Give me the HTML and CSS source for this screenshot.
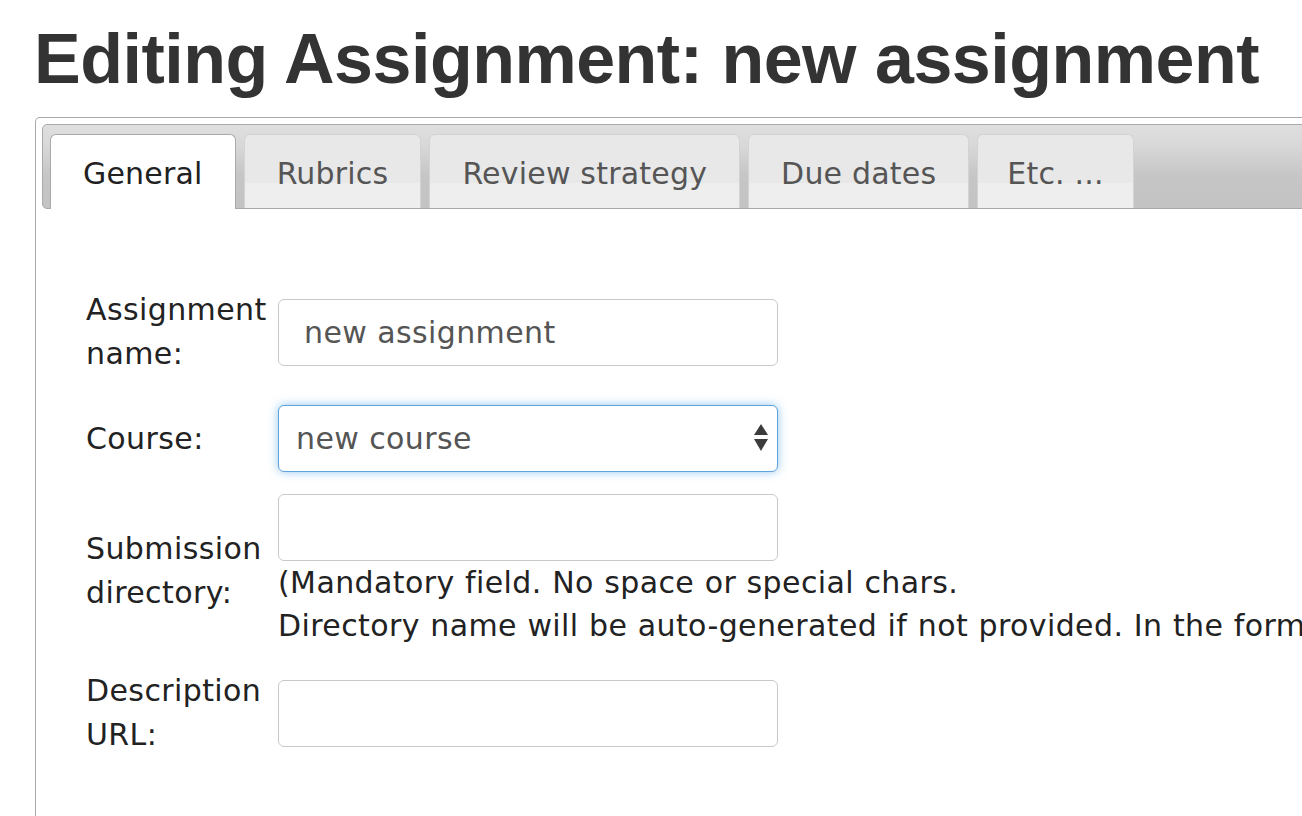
FILE: index.html
```html
<!DOCTYPE html>
<html lang="en">
<head>
    <meta charset="UTF-8">
    <meta name="viewport" content="width=device-width, initial-scale=1.0">
    <title>Editing Assignment</title>
    <link rel="stylesheet" href="styles.css">
</head>
<body>
    <h1 class="page-title">Editing Assignment: new assignment</h1>

    <div class="tabs">
        <ul class="tab-nav">
            <li class="tab active"><a href="#general">General</a></li>
            <li class="tab"><a href="#rubrics">Rubrics</a></li>
            <li class="tab"><a href="#review">Review strategy</a></li>
            <li class="tab"><a href="#due-dates">Due dates</a></li>
            <li class="tab"><a href="#etc">Etc. ...</a></li>
        </ul>

        <div class="tab-panel" id="general">
            <table class="form-table">
                <tr class="row-first">
                    <td class="label">Assignment name:</td>
                    <td><input class="field" type="text" name="name" value="new assignment"></td>
                </tr>
                <tr>
                    <td class="label">Course:</td>
                    <td>
                        <span class="select-wrap">
                            <select class="field select" name="course">
                                <option>new course</option>
                            </select>
                            <!-- up/down arrows of the select -->
                            <svg class="select-arrows" width="14" height="27" viewBox="0 0 14 27">
                                <polygon points="7,0 14,11 0,11" fill="#3c3c3c"/>
                                <polygon points="0,15 14,15 7,27" fill="#3c3c3c"/>
                            </svg>
                        </span>
                    </td>
                </tr>
                <tr>
                    <td class="label">Submission directory:</td>
                    <td>
                        <input class="field" type="text" name="directory">
                        <div class="hint">(Mandatory field. No space or special chars.<br>Directory name will be auto-generated if not provided. In the format of assignment name.)</div>
                    </td>
                </tr>
                <tr>
                    <td class="label">Description URL:</td>
                    <td><input class="field" type="text" name="url"></td>
                </tr>
            </table>
        </div>
    </div>
</body>
</html>
```

FILE: styles.css
```css
html, body {
    overflow: hidden;
}
body {
    margin: 0;
    padding: 0;
    background-color: white;
    font-family: "DejaVu Sans", Verdana, sans-serif;
}
.page-title {
    margin: 0;
    padding: 20px 0 0 34px;
    font-family: "Liberation Sans", Arial, sans-serif;
    font-size: 70px;
    line-height: 78px;
    letter-spacing: -0.5px;
    font-weight: bold;
    color: #333;
    white-space: nowrap;
}
.tabs {
    margin: 19px 0 0 35px;
    width: 2000px;
    min-height: 800px;
    padding: 6px;
    border: 1px solid #aaa;
    border-bottom: none;
    border-radius: 5px 5px 0 0;
}
.tab-nav {
    display: flex;
    margin: 0;
    padding: 9px 7px 0;
    list-style: none;
    border: 1px solid #aaa;
    border-radius: 5px;
    background: linear-gradient(#dfdfdf 0%, #d8d8d8 25%, #c6c6c6 60%, #c3c3c3 100%);
}
.tab {
    margin-right: 8px;
    border: 1px solid #d3d3d3;
    border-bottom: none;
    border-radius: 6px 6px 0 0;
    background: linear-gradient(#e8e8e8 66%, #eeeeee 66%);
}
.tab a {
    display: block;
    padding: 20px 32px 15px;
    font-size: 30px;
    line-height: 38px;
    letter-spacing: 0.2px;
    color: #555;
    text-decoration: none;
    white-space: nowrap;
}
.tab:last-child a {
    padding: 20px 29px 15px;
}
.tab.active {
    margin-bottom: -1px;
    padding-bottom: 1px;
    border-color: #aaa;
    background: white;
}
.tab.active a {
    color: #212121;
}
.tab-panel {
    padding: 67px 0 0 44px;
}
.form-table {
    border-collapse: separate;
    border-spacing: 0;
    font-size: 30px;
    line-height: 44px;
    letter-spacing: 0.4px;
    color: #222;
}
.form-table td {
    padding: 12px 0 10px;
    vertical-align: middle;
}
.form-table .row-first td {
    padding-bottom: 17px;
}
.form-table td.label {
    width: 186px;
    padding-right: 6px;
}
.field {
    display: block;
    box-sizing: border-box;
    width: 500px;
    height: 67px;
    margin: 0;
    padding: 0 25px;
    border: 1px solid #c9c9c9;
    border-radius: 6px;
    background: white;
    font-family: "DejaVu Sans", Verdana, sans-serif;
    font-size: 30px;
    letter-spacing: 0.4px;
    color: #555;
}
.select-wrap {
    position: relative;
    display: block;
    width: 500px;
}
.field.select {
    -webkit-appearance: none;
    appearance: none;
    padding: 0 40px 0 17px;
    border-color: #5ea2df;
    box-shadow: 0 0 10px rgba(102, 175, 233, 0.7);
}
.select-arrows {
    position: absolute;
    right: 10px;
    top: 19px;
}
.hint {
    line-height: 43px;
    word-spacing: 0.5px;
    white-space: nowrap;
}
```
